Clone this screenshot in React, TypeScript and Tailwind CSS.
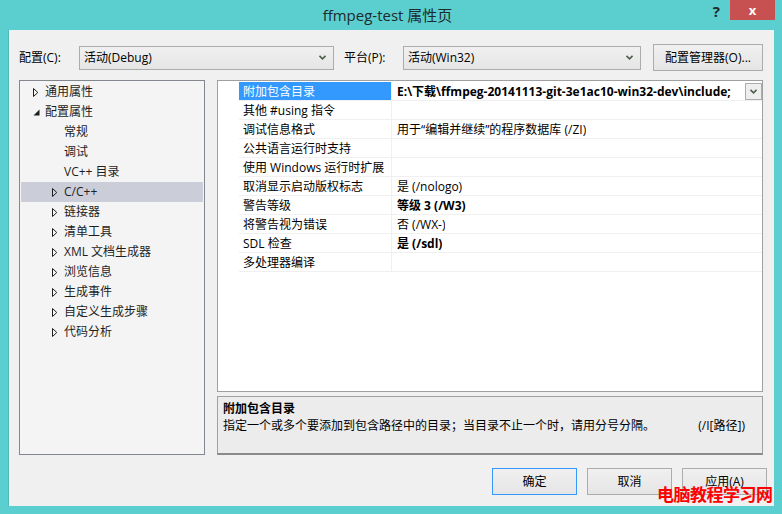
import React from "react";

const FONT = '"Segoe UI", "Open Sans", "Noto Sans CJK SC", sans-serif';

function Chevron({ className = "" }: { className?: string }) {
  return (
    <svg width="7" height="5" viewBox="0 0 7 5" className={className}>
      <path d="M0.5 0.8 L3.5 3.8 L6.5 0.8" fill="none" stroke="#4f5f4f" strokeWidth="1.6" />
    </svg>
  );
}

function Collapsed() {
  return (
    <svg width="6" height="9" viewBox="0 0 6 9">
      <path d="M0.5 0.5 L4.8 4.5 L0.5 8.5 Z" fill="none" stroke="#1e1e1e" strokeWidth="1" />
    </svg>
  );
}

function Expanded() {
  return (
    <svg width="7" height="7" viewBox="0 0 7 7">
      <path d="M6.5 0.5 L6.5 6.5 L0.5 6.5 Z" fill="#1e1e1e" />
    </svg>
  );
}

type TreeItem = { label: string; level: 0 | 1; arrow: "none" | "c" | "e"; selected?: boolean };

const tree: TreeItem[] = [
  { label: "通用属性", level: 0, arrow: "c" },
  { label: "配置属性", level: 0, arrow: "e" },
  { label: "常规", level: 1, arrow: "none" },
  { label: "调试", level: 1, arrow: "none" },
  { label: "VC++ 目录", level: 1, arrow: "none" },
  { label: "C/C++", level: 1, arrow: "c", selected: true },
  { label: "链接器", level: 1, arrow: "c" },
  { label: "清单工具", level: 1, arrow: "c" },
  { label: "XML 文档生成器", level: 1, arrow: "c" },
  { label: "浏览信息", level: 1, arrow: "c" },
  { label: "生成事件", level: 1, arrow: "c" },
  { label: "自定义生成步骤", level: 1, arrow: "c" },
  { label: "代码分析", level: 1, arrow: "c" },
];

type Prop = { name: string; value: string; bold?: boolean };
const props: Prop[] = [
  { name: "附加包含目录", value: "E:\\下载\\ffmpeg-20141113-git-3e1ac10-win32-dev\\include;", bold: true },
  { name: "其他 #using 指令", value: "" },
  { name: "调试信息格式", value: "用于“编辑并继续”的程序数据库 (/ZI)" },
  { name: "公共语言运行时支持", value: "" },
  { name: "使用 Windows 运行时扩展", value: "" },
  { name: "取消显示启动版权标志", value: "是 (/nologo)" },
  { name: "警告等级", value: "等级 3 (/W3)", bold: true },
  { name: "将警告视为错误", value: "否 (/WX-)" },
  { name: "SDL 检查", value: "是 (/sdl)", bold: true },
  { name: "多处理器编译", value: "" },
];

function Combo({ text, width }: { text: string; width: string }) {
  return (
    <div
      className={`${width} h-[24px] flex items-center justify-between pl-[4px] pr-[7px] border border-[#acacac] bg-gradient-to-b from-[#f0f0f0] to-[#e5e5e5] text-[12px] text-black`}
    >
      <span>{text}</span>
      <Chevron />
    </div>
  );
}

function Btn({ text, def }: { text: string; def?: boolean }) {
  return (
    <div
      className={`w-[85px] h-[27px] flex items-center justify-center border ${
        def ? "border-[#3399ff]" : "border-[#acacac]"
      } bg-gradient-to-b from-[#f0f0f0] to-[#e5e5e5] text-[12px] text-black`}
    >
      {text}
    </div>
  );
}

export default function App() {
  return (
    <div
      className="relative w-[782px] h-[514px] bg-[#5bcfcf] flex flex-col overflow-hidden"
      style={{ fontFamily: FONT }}
    >
      {/* title bar */}
      <div className="h-[30px] flex items-start shrink-0">
        <div className="flex-1" />
        <div className="pt-[5px] text-[15px] leading-[20px] text-[#1c2b2b]">ffmpeg-test 属性页</div>
        <div className="flex-1 flex justify-end items-start pr-[7px]">
          <div className="mt-[1px] mr-[10px] text-[15px] leading-[20px] font-bold text-[#1e2a2a]">?</div>
          <div className="w-[45px] h-[20px] bg-[#c75050] flex items-center justify-center text-white text-[13px] font-bold leading-none">
            x
          </div>
        </div>
      </div>

      {/* body */}
      <div className="mx-[8px] h-[476px] bg-[#f0f0f0] border-l border-[#4cb8b8] flex flex-col pl-[10px] shrink-0">
        {/* config row */}
        <div className="mt-[14px] h-[27px] flex items-center text-[12px] text-black">
          <span className="w-[60px]">配置(C):</span>
          <Combo text="活动(Debug)" width="w-[255px]" />
          <span className="ml-[10px] w-[59px]">平台(P):</span>
          <Combo text="活动(Win32)" width="w-[238px]" />
          <div className="ml-[12px] w-[110px] h-[27px] flex items-center justify-center border border-[#acacac] bg-gradient-to-b from-[#f0f0f0] to-[#e5e5e5]">
            配置管理器(O)...
          </div>
        </div>

        {/* main */}
        <div className="mt-[9px] h-[375px] flex">
          {/* tree */}
          <div className="w-[186px] h-full border border-[#828790] bg-[#f4f4f4] pt-[1px] px-[1px]">
            {tree.map((t, i) => (
              <div
                key={i}
                className={`h-[20px] flex items-center text-[12px] text-[#1e1e1e] ${
                  t.selected ? "bg-[#cbcdd9]" : ""
                }`}
              >
                <div className={`${t.level === 0 ? "w-[11px] ml-[12px]" : "w-[11px] ml-[31px]"} flex items-center`}>
                  {t.arrow === "c" && <Collapsed />}
                  {t.arrow === "e" && <Expanded />}
                </div>
                <span className="ml-[1px]">{t.label}</span>
              </div>
            ))}
          </div>

          {/* right column */}
          <div className="ml-[12px] w-[546px] flex flex-col">
            <div className="h-[312px] border border-[#a0a0a0] bg-white flex pt-[1px]">
              <div className="w-[21px]" />
              <div className="flex-1 flex flex-col">
                {props.map((p, i) => (
                  <div key={i} className="h-[19px] flex border-b border-[#f0f0f0] text-[12px]">
                    <div
                      className={`w-[153px] pl-[4px] pt-[1px] flex items-center border-r border-[#f0f0f0] ${
                        i === 0 ? "bg-[#3399ff] text-white" : "text-black"
                      }`}
                    >
                      {p.name}
                    </div>
                    <div
                      className={`flex-1 pl-[5px] flex items-center justify-between text-black whitespace-nowrap overflow-hidden ${
                        p.bold ? "font-bold" : ""
                      }`}
                    >
                      <span className="overflow-hidden pt-[1px]">{p.value}</span>
                      {i === 0 && (
                        <div className="w-[17px] h-[17px] shrink-0 border border-[#acacac] bg-[#eeeeee] flex items-center justify-center">
                          <Chevron />
                        </div>
                      )}
                    </div>
                  </div>
                ))}
              </div>
            </div>
            <div className="mt-[4px] h-[59px] border border-[#a0a0a0] border-b-[#8a8a8a] border-b-2 bg-[#ececec] px-[5px] pt-[3px] text-[12px] text-black">
              <div className="font-bold leading-[17px]">附加包含目录</div>
              <div className="flex justify-between leading-[17px] pr-[12px]">
                <span>指定一个或多个要添加到包含路径中的目录；当目录不止一个时，请用分号分隔。</span>
                <span>(/I[路径])</span>
              </div>
            </div>
          </div>
        </div>

        {/* buttons */}
        <div className="mt-[13px] flex justify-end gap-[10px] pr-[7px]">
          <Btn text="确定" def />
          <Btn text="取消" />
          <Btn text="应用(A)" />
        </div>
      </div>

      {/* watermark */}
      <div className="absolute left-[657px] top-[484px] text-[17px] font-bold text-[#ff0000] leading-[22px] tracking-[-0.5px]">
        电脑教程学习网
      </div>
    </div>
  );
}
